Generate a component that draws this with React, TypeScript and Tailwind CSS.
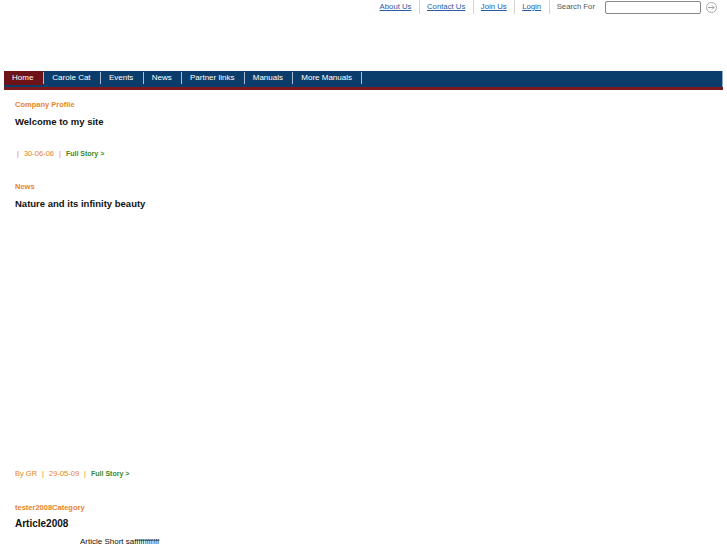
import React from "react";

const navItems = ["Home", "Carole Cat", "Events", "News", "Partner links", "Manuals", "More Manuals"];

function TopLink({ label }: { label: string }) {
  return (
    <a href="#" className="text-[7.75px] leading-[12px] text-[#2a5aa6] underline underline-offset-1">
      {label}
    </a>
  );
}

function Sep() {
  return <span className="ml-[7.5px] mr-[7px] h-[14px] w-px bg-[#d4d4d4]" />;
}

export default function App() {
  return (
    <div className="w-[727px] h-[545px] overflow-hidden bg-white" style={{ fontFamily: '"Liberation Sans", Arial, sans-serif' }}>
      {/* top utility bar */}
      <div className="flex h-[14px] items-center justify-end pr-[10px]">
        <TopLink label="About Us" />
        <Sep />
        <TopLink label="Contact Us" />
        <Sep />
        <TopLink label="Join Us" />
        <Sep />
        <TopLink label="Login" />
        <Sep />
        <span className="text-[7.75px] leading-[12px] text-[#555]">Search For</span>
        <input className="ml-[10px] h-[13px] w-[96px] rounded-[2px] border border-[#888] bg-white" />
        <span className="ml-[5px] flex h-[11px] w-[11px] items-center justify-center rounded-full border border-[#aaa]">
          <svg width="7" height="5" viewBox="0 0 7 5">
            <path d="M0 2.5H6M4 0.5L6 2.5L4 4.5" fill="none" stroke="#999" strokeWidth="0.9" />
          </svg>
        </span>
      </div>

      {/* nav */}
      <div className="mx-[4px] mt-[57px] w-[719px] border-b-[3px] border-[#7a1a1e]">
        <div className="flex h-[16px] items-start bg-[#0a3d6b] border-r border-[#8aaad0]">
          {navItems.map((n, i) => (
            <React.Fragment key={n}>
              <div
                className={
                  i === 0
                    ? "flex h-[14px] items-center bg-[#6e1418] pl-[8px] pr-[10px] text-[8px] text-white"
                    : "flex h-[14px] items-center pl-[8px] pr-[9.3px] text-[8px] text-white"
                }
              >
                {n}
              </div>
              <span className="mt-[1px] h-[12px] w-px bg-[#a9bdd6]" />
            </React.Fragment>
          ))}
        </div>
      </div>

      {/* content */}
      <div className="pl-[15px]">
        <div className="mt-[10px] text-[7.5px] font-bold leading-[10px] text-[#e8832a]">Company Profile</div>
        <div className="mt-[5px] text-[9.5px] font-bold leading-[14px] text-[#111]">Welcome to my site</div>
        <div className="mt-[20px] flex items-center text-[7.5px] leading-[10px] text-[#e8832a]">
          <span className="ml-[2px]">|</span>
          <span className="ml-[5px]">30-06-06</span>
          <span className="ml-[5px]">|</span>
          <span className="ml-[5px] text-[7px] font-bold text-[#3a8a2a]">Full Story &gt;</span>
        </div>

        <div className="mt-[23px] text-[7.5px] font-bold leading-[10px] text-[#e8832a]">News</div>
        <div className="mt-[5px] text-[9.5px] font-bold leading-[14px] text-[#111]">Nature and its infinity beauty</div>
        <div className="mt-[258px] flex items-center text-[7.5px] leading-[10px] text-[#e8832a]">
          <span>By GR</span>
          <span className="ml-[5px]">|</span>
          <span className="ml-[5px]">29-05-09</span>
          <span className="ml-[5px]">|</span>
          <span className="ml-[5px] text-[7px] font-bold text-[#3a8a2a]">Full Story &gt;</span>
        </div>

        <div className="mt-[24px] text-[7.5px] font-bold leading-[10px] text-[#e8832a]">tester2008Category</div>
        <div className="mt-[4px] text-[10px] font-bold leading-[14px] text-[#111]">Article2008</div>
        <div className="mt-[5px] flex items-end leading-[12px]">
          <span className="ml-[26px] mb-[-4px] h-[1px] w-[2px] bg-[#d04040]" />
          <span className="ml-[37px] text-[8px] text-[#111]">Article Short saffffffffffff</span>
        </div>
      </div>
    </div>
  );
}
